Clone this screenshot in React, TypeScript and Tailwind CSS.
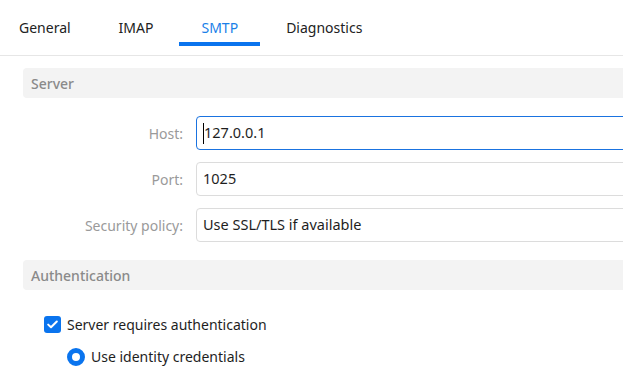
import React from "react";

const font = { fontFamily: '"Noto Sans", "Open Sans", sans-serif' };

function Field({ label, value, focused, cursor }: { label: string; value: string; focused?: boolean; cursor?: boolean }) {
  return (
    <div className="flex items-center">
      <div className="w-[160px] shrink-0 pr-0 text-right text-[14px] text-[#9a9a9a]">{label}</div>
      <div
        className={
          focused
            ? "ml-[13px] flex h-[34px] w-[500px] shrink-0 items-center rounded-[4px] border border-[#1a73e0] pl-[6px] text-[14.5px] text-[#1e1e1e]"
            : "ml-[13px] flex h-[34px] w-[500px] shrink-0 items-center rounded-[4px] border border-[#dcdcdc] pl-[6px] text-[14.5px] text-[#1e1e1e]"
        }
      >
        {cursor && <span className="h-[21px] w-[1px] bg-black" />}
        <span>{value}</span>
      </div>
    </div>
  );
}

function Header({ title }: { title: string }) {
  return (
    <div className="flex h-[30px] w-[640px] items-center rounded-[4px] bg-[#f3f3f3] pl-[8px] text-[14px] font-medium text-[#8a8a8a]">
      {title}
    </div>
  );
}

export default function App() {
  return (
    <div className="h-[377px] w-[623px] overflow-hidden bg-white" style={font}>
      <div className="relative flex h-[56px] items-center gap-[48px] border-b border-[#e6e6e6] pl-[19px] text-[14px] text-[#222]">
        <span>General</span>
        <span>IMAP</span>
        <span className="relative text-[#1a7fe8]">
          SMTP
          <span className="absolute -left-[22px] -right-[22px] top-[25px] h-[4px] bg-[#0a74ee]" />
        </span>
        <span>Diagnostics</span>
      </div>
      <div className="flex flex-col pl-[23px] pt-[12px]">
        <Header title="Server" />
        <div className="mt-[18px] flex flex-col gap-[12px]">
          <Field label="Host:" value="127.0.0.1" focused cursor />
          <Field label="Port:" value="1025" />
          <Field label="Security policy:" value="Use SSL/TLS if available" />
        </div>
        <div className="mt-[18px]">
          <Header title="Authentication" />
        </div>
        <div className="mt-[24px] flex items-center pl-[21px] text-[14px] text-[#1e1e1e]">
          <span className="flex h-[17px] w-[17px] items-center justify-center rounded-[3px] bg-[#0a74ee]">
            <svg width="11" height="9" viewBox="0 0 11 9" fill="none">
              <path d="M1.2 4.6 L4 7.3 L9.8 1.5" stroke="white" strokeWidth="2" strokeLinecap="round" strokeLinejoin="round" />
            </svg>
          </span>
          <span className="ml-[6px]">Server requires authentication</span>
        </div>
        <div className="mt-[11px] flex items-center pl-[44px] text-[14px] text-[#1e1e1e]">
          <span className="h-[18px] w-[18px] rounded-full border-[5px] border-[#0a74ee] bg-white" />
          <span className="ml-[6px]">Use identity credentials</span>
        </div>
      </div>
    </div>
  );
}
